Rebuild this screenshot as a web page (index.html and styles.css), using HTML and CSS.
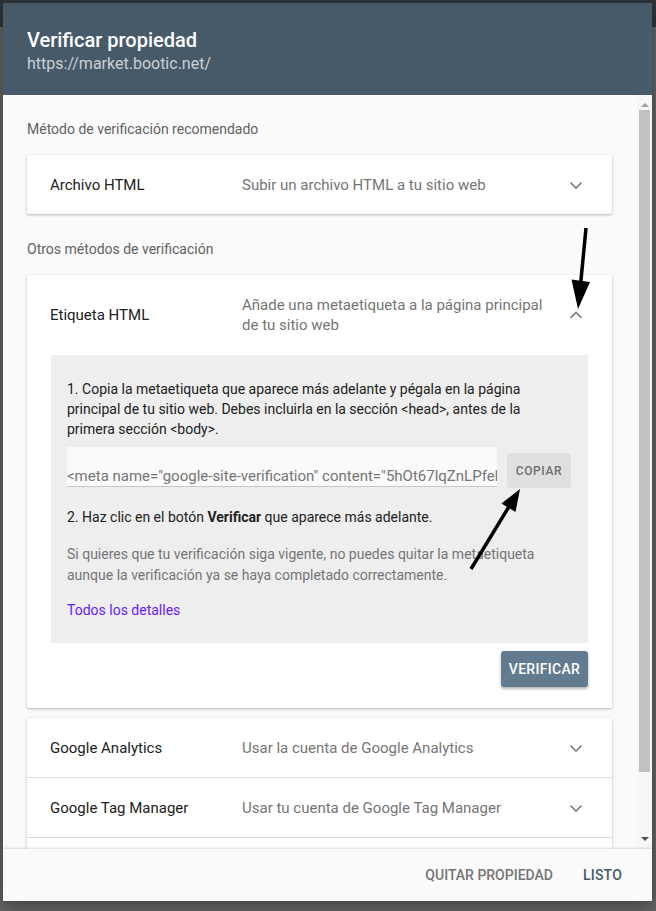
FILE: index.html
```html
<!DOCTYPE html>
<html lang="es">
<head>
<meta charset="utf-8">
<title>Verificar propiedad</title>
<link rel="stylesheet" href="styles.css">
</head>
<body>
<div class="backdrop-top"></div>
<div class="dialog">
  <header class="dlg-header">
    <h1 class="dlg-title">Verificar propiedad</h1>
    <div class="dlg-url">https://market.bootic.net/</div>
  </header>
  <div class="dlg-body">
    <div class="scroll-content">
      <div class="section-label">Método de verificación recomendado</div>
      <div class="card">
        <div class="row">
          <div class="row-title">Archivo HTML</div>
          <div class="row-desc">Subir un archivo HTML a tu sitio web</div>
          <svg class="chev" width="24" height="24" viewBox="0 0 24 24"><polyline points="6.5,9.5 12,15 17.5,9.5"/></svg>
        </div>
      </div>
      <div class="section-label second">Otros métodos de verificación</div>
      <div class="card">
        <div class="row row-tall">
          <div class="row-title">Etiqueta HTML</div>
          <div class="row-desc narrow">Añade una metaetiqueta a la página principal de tu sitio web</div>
          <svg class="chev" width="24" height="24" viewBox="0 0 24 24"><polyline points="6.5,15 12,9.5 17.5,15"/></svg>
        </div>
        <div class="panel">
          <p class="step step1">1. Copia la metaetiqueta que aparece más adelante y pégala en la página principal de tu sitio web. Debes incluirla en la sección &lt;head&gt;, antes de la primera sección &lt;body&gt;.</p>
          <div class="copy-row">
            <div class="meta-field">&lt;meta name="google-site-verification" content="5hOt67lqZnLPfeh</div>
            <button class="copy-btn">COPIAR</button>
          </div>
          <p class="step step2">2. Haz clic en el botón <b>Verificar</b> que aparece más adelante.</p>
          <p class="note">Si quieres que tu verificación siga vigente, no puedes quitar la metaetiqueta aunque la verificación ya se haya completado correctamente.</p>
          <a class="details" href="#">Todos los detalles</a>
        </div>
        <div class="card-actions">
          <button class="verify-btn">VERIFICAR</button>
        </div>
      </div>
      <div class="card list-card">
        <div class="row">
          <div class="row-title">Google Analytics</div>
          <div class="row-desc">Usar la cuenta de Google Analytics</div>
          <svg class="chev" width="24" height="24" viewBox="0 0 24 24"><polyline points="6.5,9.5 12,15 17.5,9.5"/></svg>
        </div>
        <div class="row divided">
          <div class="row-title">Google Tag Manager</div>
          <div class="row-desc">Usar tu cuenta de Google Tag Manager</div>
          <svg class="chev" width="24" height="24" viewBox="0 0 24 24"><polyline points="6.5,9.5 12,15 17.5,9.5"/></svg>
        </div>
        <div class="row divided"></div>
      </div>
    </div>
    <div class="scrollbar">
      <div class="sb-arrow up"></div>
      <div class="sb-thumb"></div>
      <div class="sb-arrow down"></div>
    </div>
  </div>
  <footer class="dlg-footer">
    <button class="text-btn muted">QUITAR PROPIEDAD</button>
    <button class="text-btn primary">LISTO</button>
  </footer>
</div>
<svg class="annotations" width="656" height="911" viewBox="0 0 656 911">
  <line x1="586" y1="228" x2="580.7" y2="283" stroke="#000" stroke-width="3.5"/>
  <polygon points="571.5,279.5 590,282 578,309" fill="#000"/>
  <line x1="471" y1="569" x2="510" y2="505" stroke="#000" stroke-width="3.5"/>
  <polygon points="501.5,503.5 515.5,512 520,489" fill="#000"/>
</svg>
</body>
</html>
```
FILE: styles.css
```css
* { box-sizing: border-box; }
html, body { margin: 0; padding: 0; }
body {
  width: 656px;
  height: 911px;
  overflow: hidden;
  background: #646464;
  font-family: Roboto, "Liberation Sans", Arial, sans-serif;
  position: relative;
}
.backdrop-top {
  position: absolute;
  left: 0; top: 0;
  width: 656px; height: 27px;
  background: #2e353c;
}
.dialog {
  position: relative;
  margin: 3px 0 0 3px;
  width: 649px;
  height: 898px;
  background: #fafafa;
  display: flex;
  flex-direction: column;
  box-shadow: 0 4px 16px rgba(0,0,0,.4);
}
.dlg-header {
  background: #475a6a;
  height: 92px;
  padding: 24px 24px 0 24px;
  flex: none;
}
.dlg-title {
  margin: 0;
  font-size: 20px;
  font-weight: 500;
  line-height: 26px;
  color: #fff;
}
.dlg-url {
  font-size: 16px;
  line-height: 21px;
  color: rgba(255,255,255,.72);
}
.dlg-body {
  flex: 1;
  display: flex;
  min-height: 0;
  background: #fafafa;
}
.scroll-content {
  flex: 1;
  overflow: hidden;
  padding: 24px 25px 0 24px;
}
.section-label {
  font-size: 14px;
  line-height: 20px;
  color: #616161;
  margin-bottom: 16px;
}
.section-label.second { margin-top: 25px; }
.card {
  background: #fff;
  box-shadow: 0 1px 3px rgba(0,0,0,.28);
  border-radius: 2px;
}
.list-card { margin-top: 10px; }
.row {
  display: flex;
  align-items: center;
  height: 59px;
  padding: 0 24px 0 23px;
}
.row.divided { border-top: 1px solid #dcdcdc; height: 60px; }
.row-tall { height: 80px; }
.row-title {
  width: 192px;
  flex: none;
  font-size: 15px;
  color: #212121;
}
.row-desc {
  flex: 1;
  font-size: 15px;
  line-height: 20px;
  color: #757575;
}
.row-desc.narrow { padding-right: 12px; }
.chev {
  flex: none;
  fill: none;
  stroke: #7a7a7a;
  stroke-width: 1.6;
}
.panel {
  margin: 0 24px;
  background: #eeeeee;
  padding: 24px 16px 23px 16px;
  font-size: 14px;
  line-height: 20px;
  color: #212121;
}
.step { margin: 0; }
.step1 { max-width: 470px; }
.copy-row {
  display: flex;
  align-items: flex-start;
  margin-top: 8px;
}
.meta-field {
  width: 430px;
  height: 40px;
  padding-top: 20px;
  line-height: 18px;
  background: #fafafa;
  border-bottom: 1px solid #c8c8c8;
  font-size: 15px;
  color: #757575;
  white-space: nowrap;
  overflow: hidden;
}
.copy-btn {
  margin: 6px 0 0 10px;
  width: 64px;
  height: 35px;
  border: none;
  border-radius: 3px;
  background: #e0e0e0;
  color: #6f6f6f;
  font-family: inherit;
  font-size: 12px;
  font-weight: 500;
  letter-spacing: .6px;
  padding: 0;
}
.step2 { margin-top: 19px; }
.note { margin: 17px 0 0 0; color: #757575; line-height: 20.5px; }
.details {
  display: block;
  margin-top: 15px;
  color: #6a1aff;
  text-decoration: none;
}
.card-actions {
  display: flex;
  justify-content: flex-end;
  padding: 8px 24px 21px 0;
}
.verify-btn {
  width: 87px;
  height: 36px;
  border: none;
  border-radius: 3px;
  background: #627b8e;
  color: #fff;
  font-family: inherit;
  font-size: 14px;
  font-weight: 500;
  letter-spacing: .3px;
  box-shadow: 0 2px 3px rgba(0,0,0,.3);
  padding: 0;
}
.scrollbar {
  width: 15px;
  flex: none;
  background: #f6f6f6;
  display: flex;
  flex-direction: column;
  align-items: center;
}
.sb-arrow { width: 0; height: 0; flex: none; }
.sb-arrow.up {
  margin-top: 8px;
  border-left: 4px solid transparent;
  border-right: 4px solid transparent;
  border-bottom: 4px solid #a3a3a3;
}
.sb-thumb {
  margin-top: 3px;
  width: 11px;
  height: 662px;
  background: #c1c1c1;
}
.sb-arrow.down {
  margin-top: auto;
  margin-bottom: 8px;
  border-left: 4px solid transparent;
  border-right: 4px solid transparent;
  border-top: 4px solid #505050;
}
.dlg-footer {
  flex: none;
  height: 52px;
  display: flex;
  justify-content: flex-end;
  align-items: center;
  gap: 30px;
  padding-right: 30px;
  background: #fafafa;
  box-shadow: 0 -1px 2px rgba(0,0,0,.12);
  position: relative;
}
.text-btn {
  border: none;
  background: none;
  padding: 0;
  font-family: inherit;
  font-size: 14px;
  font-weight: 500;
}
.text-btn.muted { color: #757575; }
.text-btn.primary { color: #455a64; letter-spacing: .2px; }
.annotations {
  position: absolute;
  left: 0; top: 0;
  pointer-events: none;
}
```
